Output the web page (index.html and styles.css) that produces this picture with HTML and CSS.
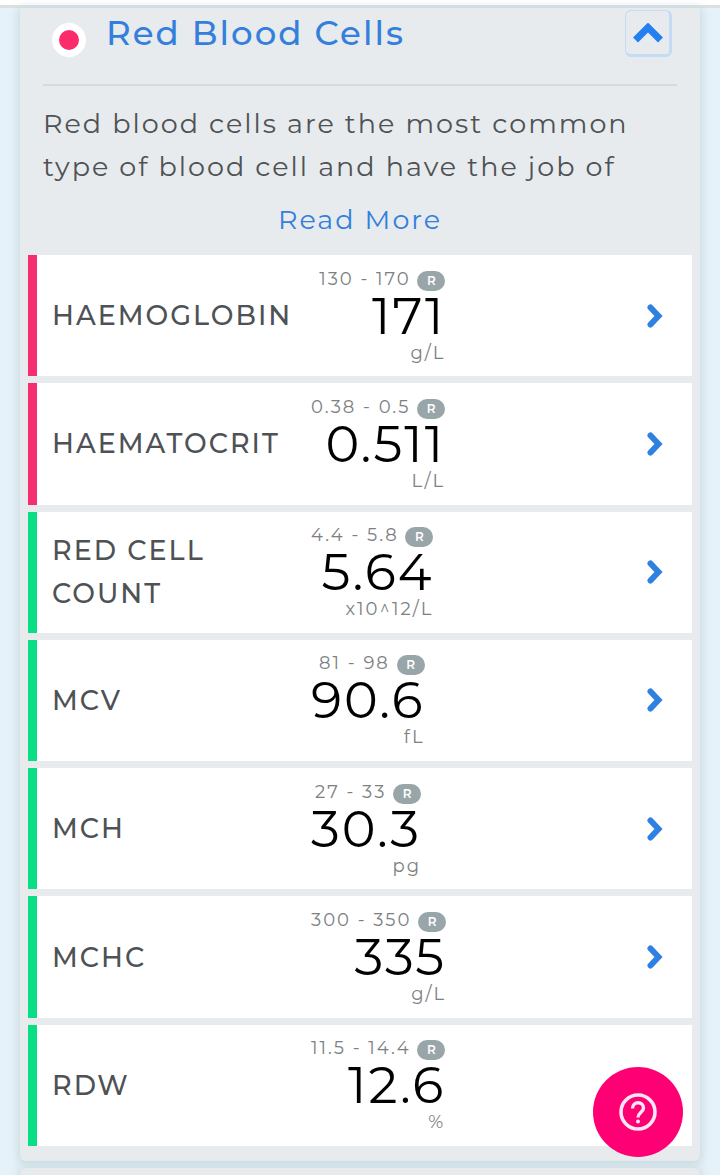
FILE: index.html
```html
<!DOCTYPE html>
<html lang="en">
<head>
<meta charset="utf-8">
<meta name="viewport" content="width=device-width, initial-scale=1">
<title>Red Blood Cells</title>
<link rel="stylesheet" href="styles.css">
</head>
<body>
<div class="topbar"></div>
<main class="page">
  <section class="card">
    <header class="card-head">
      <span class="status-dot"></span>
      <h1 class="title">Red Blood Cells</h1>
      <button class="collapse" type="button" aria-label="Collapse section">
        <svg width="30" height="20" viewBox="0 0 30 20"><path d="M2.500 17 L15 4.500 L27.500 17" fill="none" stroke="#247ff0" stroke-width="7"/></svg>
      </button>
    </header>
    <div class="intro">
      <p class="description">Red blood cells are the most common type of blood cell and have the job of</p>
      <a class="read-more" href="#more">Read More</a>
    </div>
    <ul class="results">
      <li class="result high">
        <h2 class="name">HAEMOGLOBIN</h2>
        <div class="reading"><div class="range">130 - 170 <span class="badge">R</span></div><div class="value">171</div><div class="unit">g/L</div></div>
        <button class="open" type="button" aria-label="Open Haemoglobin"><svg width="16" height="24" viewBox="0 0 16 24"><path d="M3.500 3.500 L11.500 12 L3.500 20.500" class="arrow"/></svg></button>
      </li>
      <li class="result high">
        <h2 class="name">HAEMATOCRIT</h2>
        <div class="reading"><div class="range">0.38 - 0.5 <span class="badge">R</span></div><div class="value">0.511</div><div class="unit">L/L</div></div>
        <button class="open" type="button" aria-label="Open Haematocrit"><svg width="16" height="24" viewBox="0 0 16 24"><path d="M3.500 3.500 L11.500 12 L3.500 20.500" class="arrow"/></svg></button>
      </li>
      <li class="result">
        <h2 class="name">RED CELL COUNT</h2>
        <div class="reading"><div class="range">4.4 - 5.8 <span class="badge">R</span></div><div class="value">5.64</div><div class="unit">x10^12/L</div></div>
        <button class="open" type="button" aria-label="Open Red Cell Count"><svg width="16" height="24" viewBox="0 0 16 24"><path d="M3.500 3.500 L11.500 12 L3.500 20.500" class="arrow"/></svg></button>
      </li>
      <li class="result">
        <h2 class="name">MCV</h2>
        <div class="reading"><div class="range">81 - 98 <span class="badge">R</span></div><div class="value">90.6</div><div class="unit">fL</div></div>
        <button class="open" type="button" aria-label="Open MCV"><svg width="16" height="24" viewBox="0 0 16 24"><path d="M3.500 3.500 L11.500 12 L3.500 20.500" class="arrow"/></svg></button>
      </li>
      <li class="result">
        <h2 class="name">MCH</h2>
        <div class="reading"><div class="range">27 - 33 <span class="badge">R</span></div><div class="value">30.3</div><div class="unit">pg</div></div>
        <button class="open" type="button" aria-label="Open MCH"><svg width="16" height="24" viewBox="0 0 16 24"><path d="M3.500 3.500 L11.500 12 L3.500 20.500" class="arrow"/></svg></button>
      </li>
      <li class="result">
        <h2 class="name">MCHC</h2>
        <div class="reading"><div class="range">300 - 350 <span class="badge">R</span></div><div class="value">335</div><div class="unit">g/L</div></div>
        <button class="open" type="button" aria-label="Open MCHC"><svg width="16" height="24" viewBox="0 0 16 24"><path d="M3.500 3.500 L11.500 12 L3.500 20.500" class="arrow"/></svg></button>
      </li>
      <li class="result">
        <h2 class="name">RDW</h2>
        <div class="reading"><div class="range">11.5 - 14.4 <span class="badge">R</span></div><div class="value">12.6</div><div class="unit">%</div></div>
      </li>
    </ul>
  </section>
  <section class="card next"></section>
</main>
<button class="help" type="button" aria-label="Help">
  <svg width="40" height="40" viewBox="0 0 40 40" fill="none" stroke="#ffe6f4">
    <circle cx="20" cy="20" r="17" stroke-width="3.600"/>
    <path d="M14.500 16.500 C14.500 9 25.500 9 25.500 16 C25.500 20 20 20.500 20 25.500" stroke-width="3.400"/>
    <circle cx="20" cy="29.500" r="2" fill="#ffe6f4" stroke="none"/>
  </svg>
</button>
</body>
</html>
```
FILE: styles.css
```css
* {
  box-sizing: border-box;
}

body {
  margin: 0;
  height: 100vh;
  overflow: hidden;
  background: #e6f2f9;
  color: #4e5255;
  font-family: Montserrat, Inter, "Open Sans", sans-serif;
  letter-spacing: 2px;
}

button {
  padding: 0;
  border: 0;
  background: none;
  cursor: pointer;
}

svg {
  display: block;
}

.topbar {
  height: 8px;
  background: #fff;
  border-bottom: 3px solid #dce0e3;
}

.page {
  display: flex;
  flex-direction: column;
  gap: 7px;
  padding: 0 20px;
}

.card {
  padding: 0 8px 15px;
  background: #e7ebee;
  border-radius: 0 0 6px 6px;
  box-shadow: 0 2px 10px 2px #c8d8df;
}

.next {
  height: 40px;
  border-radius: 6px;
}

.card-head {
  display: flex;
  align-items: flex-start;
  height: 78px;
  margin: 0 15px;
  padding: 2px 5px 0 9px;
  border-bottom: 2px solid #d5dade;
}

.status-dot {
  width: 34px;
  height: 34px;
  margin-top: 13px;
  border: 7px solid #fff;
  border-radius: 50%;
  background: #fb2c6c;
}

.title {
  flex: 1;
  margin: 0 0 0 20px;
  color: #347fdc;
  font-size: 34px;
  font-weight: 500;
  line-height: 46px;
}

.collapse {
  display: grid;
  place-items: center;
  width: 47px;
  height: 47px;
  border: 1px solid #c3dbf5;
  border-right-width: 3px;
  border-bottom-width: 3px;
  border-radius: 6px;
}

.intro {
  padding: 16px 15px 0;
  text-align: center;
}

.description {
  margin: 0;
  font-size: 27px;
  line-height: 43px;
  text-align: left;
}

.read-more {
  display: block;
  margin-top: 10px;
  color: #347fdc;
  font-size: 27px;
  line-height: 43px;
  text-decoration: none;
}

.results {
  display: grid;
  grid-auto-rows: 1fr;
  gap: 7px;
  min-height: 891px;
  margin: 14px 0 0;
  padding: 0;
  list-style: none;
}

.result {
  display: flex;
  align-items: center;
  padding: 0 29px 0 15px;
  border-left: 9px solid #08de84;
  background: #fff;
}

.high {
  border-left-color: #f52e70;
}

.name {
  width: min-content;
  min-width: 259px;
  margin: 0;
  padding-right: 27px;
  font-size: 27px;
  font-weight: 500;
  line-height: 43px;
}

.reading {
  text-align: right;
}

.range,
.unit {
  color: #7d8082;
  font-size: 18px;
  font-weight: 400;
  line-height: 24px;
}

.badge {
  display: inline-block;
  width: 28px;
  border-radius: 10px;
  background: #98a5a9;
  color: #fff;
  font-size: 12px;
  font-weight: 600;
  line-height: 20px;
  letter-spacing: 0;
  text-align: center;
}

.value {
  color: #000;
  font-size: 51px;
  font-weight: 400;
  line-height: 50px;
}

.open {
  margin-left: auto;
}

.arrow {
  fill: none;
  stroke: #2e80e2;
  stroke-width: 6;
  stroke-linecap: round;
}

.help {
  position: fixed;
  right: 37px;
  bottom: 18px;
  display: grid;
  place-items: center;
  width: 90px;
  height: 90px;
  border-radius: 50%;
  background: #ff0074;
}
```
